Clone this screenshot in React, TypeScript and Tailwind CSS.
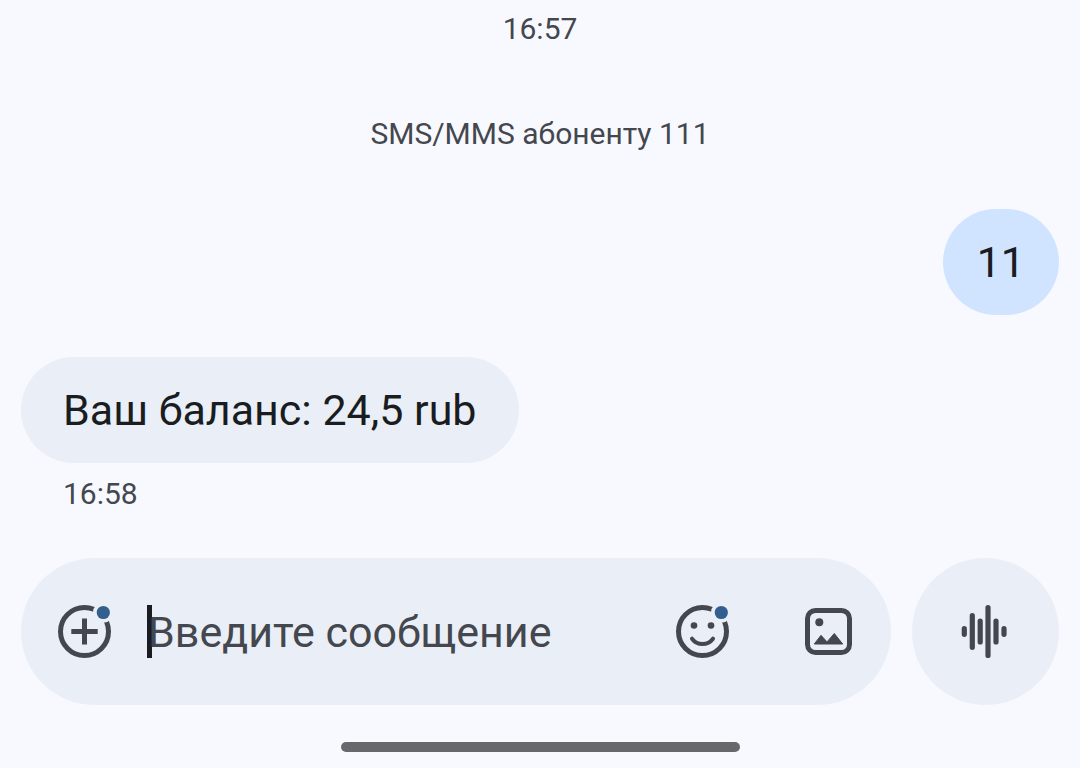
import { useState } from "react";

const messages = [
  { id: 1, text: "11", time: "", outgoing: true },
  { id: 2, text: "Ваш баланс: 24,5 rub", time: "16:58", outgoing: false },
];

function AddIcon() {
  return (
    <svg viewBox="0 0 53 53" className="size-[53px]" fill="none" aria-hidden="true">
      <circle cx="26.5" cy="26.5" r="24" stroke="#44474e" strokeWidth="5" />
      <path d="M26.5 13.5v26M13.3 26.5h26.4" stroke="#44474e" strokeWidth="5" />
      <circle cx="45.3" cy="7.5" r="10.3" fill="#eaeef6" />
      <circle cx="45.3" cy="7.5" r="6.6" fill="#335f8e" />
    </svg>
  );
}

function EmojiIcon() {
  return (
    <svg viewBox="0 0 53 53" className="size-[53px]" fill="none" aria-hidden="true">
      <circle cx="26.5" cy="26.5" r="24" stroke="#44474e" strokeWidth="5" />
      <circle cx="18" cy="20.5" r="3.3" fill="#44474e" />
      <circle cx="35" cy="20.5" r="3.3" fill="#44474e" />
      <path d="M16 33.7a13 13 0 0 0 21 0" stroke="#44474e" strokeWidth="4" strokeLinecap="round" />
      <circle cx="45.3" cy="7.5" r="10.3" fill="#eaeef6" />
      <circle cx="45.3" cy="7.5" r="6.6" fill="#335f8e" />
    </svg>
  );
}

function GalleryIcon() {
  return (
    <svg viewBox="0 0 47 47" className="size-[47px]" fill="none" aria-hidden="true">
      <rect x="2.5" y="2.5" width="42" height="42" rx="8" stroke="#44474e" strokeWidth="5" />
      <circle cx="14.3" cy="14.3" r="4" fill="#44474e" />
      <path
        d="M9.3 36 16 27.3l6 6.6 7.3-8.4L37.7 36Z"
        fill="#44474e"
        stroke="#44474e"
        strokeWidth="1"
        strokeLinejoin="round"
      />
    </svg>
  );
}

function VoiceIcon() {
  return (
    <svg viewBox="0 0 53 53" className="size-[53px]" fill="none" aria-hidden="true">
      <path
        d="M5.3 23.7v5.6M13.3 10.7v31.6M21.2 16v21M29 2.6v47.8M37 16v21M45 23.7v5.6"
        stroke="#44474e"
        strokeWidth="5.2"
        strokeLinecap="round"
      />
    </svg>
  );
}

export default function App() {
  const [text, setText] = useState("");

  return (
    <div className="flex min-h-screen flex-col bg-[#f8f9ff] px-[21px] pt-2 font-[Roboto,'Noto_Sans',sans-serif] text-[#44474e]">
      <main className="flex flex-1 flex-col">
        <time className="text-center text-[30px] leading-[42px]">16:57</time>
        <p className="mt-[63px] text-center text-[30px] leading-[42px]">SMS/MMS абоненту 111</p>

        <div className="mt-[54px] flex flex-col gap-[42px]">
          {messages.map((m) => (
            <div key={m.id} className={m.outgoing ? "flex flex-col items-end" : "flex flex-col items-start"}>
              <p
                className={
                  m.outgoing
                    ? "rounded-[53px] bg-[#d0e4ff] px-[34px] py-[27px] text-[43px] leading-[52px] text-[#191c20]"
                    : "rounded-[53px] bg-[#eaeef6] px-[42px] py-[27px] text-[43px] leading-[52px] text-[#191c20]"
                }
              >
                {m.text}
              </p>
              {m.time && <time className="mt-[10px] px-[42px] text-[30px] leading-[42px]">{m.time}</time>}
            </div>
          ))}
        </div>
      </main>

      <form className="flex gap-[21px]" onSubmit={(e) => e.preventDefault()}>
        <div className="flex h-[147px] min-w-0 flex-1 items-center rounded-full bg-[#eaeef6] pr-[39px] pl-[37px]">
          <button type="button" aria-label="Добавить">
            <AddIcon />
          </button>
          <span className="-mr-1 ml-9 h-[53px] w-[5px] shrink-0 bg-[#191c20]" />
          <input
            type="text"
            aria-label="Введите сообщение"
            placeholder="Введите сообщение"
            value={text}
            onChange={(e) => setText(e.target.value)}
            className="min-w-0 flex-1 bg-transparent text-[43px] leading-[52px] outline-none placeholder:text-[#44474e]"
          />
          <button type="button" aria-label="Эмодзи">
            <EmojiIcon />
          </button>
          <button type="button" aria-label="Галерея" className="ml-[76px]">
            <GalleryIcon />
          </button>
        </div>
        <button
          type="button"
          aria-label="Голосовое сообщение"
          className="flex size-[147px] items-center justify-center rounded-full bg-[#eaeef6]"
        >
          <VoiceIcon />
        </button>
      </form>

      <div className="mx-auto mt-[37px] mb-4 h-[10px] w-[399px] rounded-full bg-[#66696b]" />
    </div>
  );
}
